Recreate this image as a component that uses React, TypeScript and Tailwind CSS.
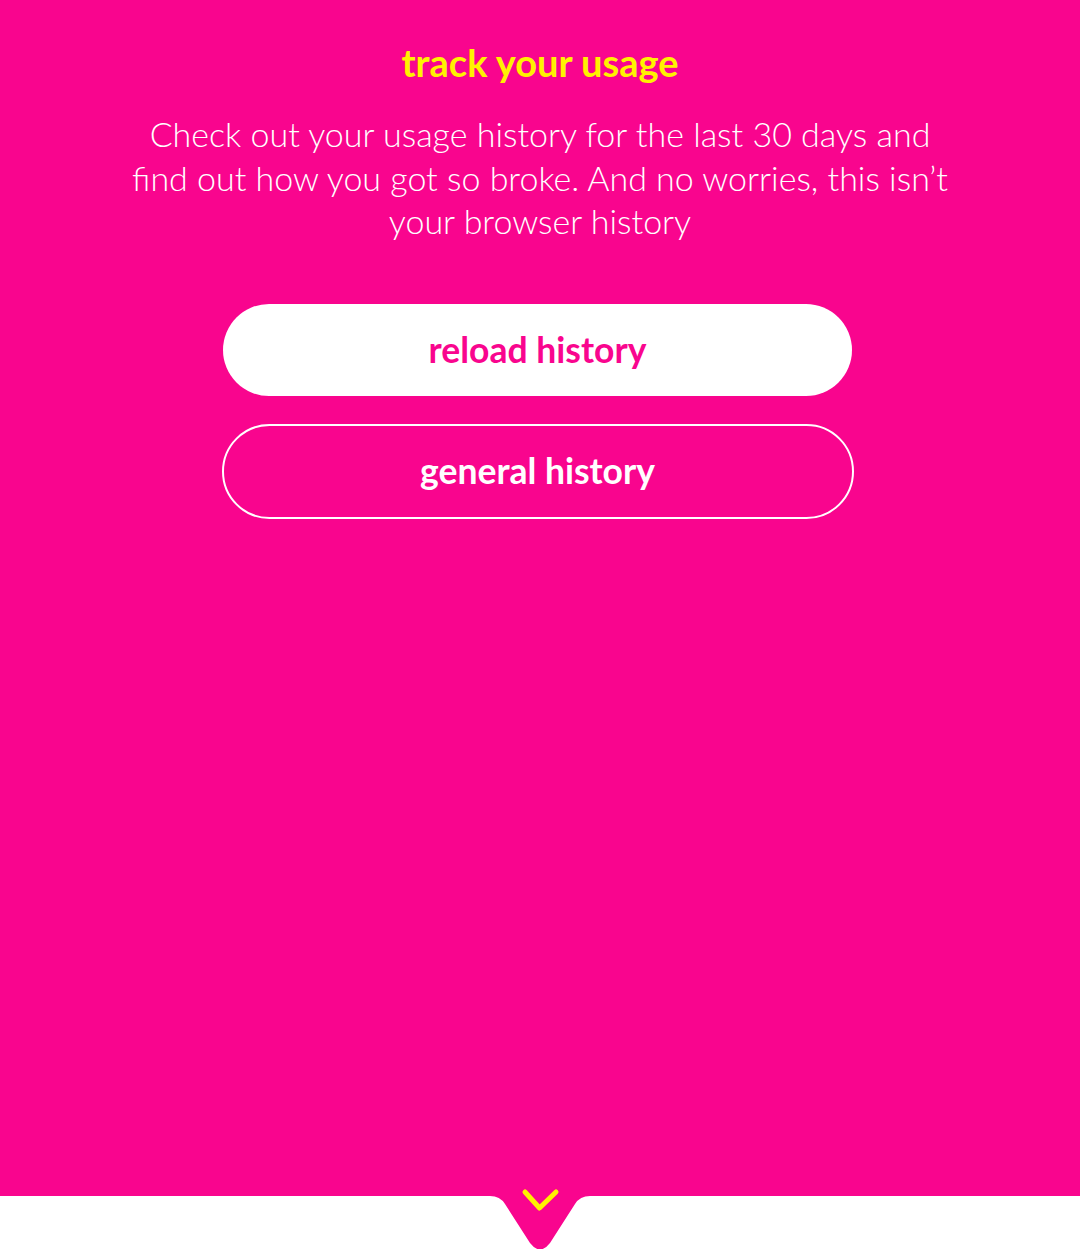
export default function App() {
  return (
    <main className="flex min-h-[1249px] flex-col bg-[#f9058e] font-['Lato',sans-serif]">
      <section className="flex flex-1 flex-col items-center px-6 pt-[36px]">
        <h1 className="text-[38px] font-bold leading-[52px] text-[#fff200]">track your usage</h1>
        <p className="mt-[24px] w-[830px] text-center text-[34px] font-light leading-[43.5px] text-white">
          Check out your usage history for the last 30 days and find out how you got so broke. And no worries, this isn’t your browser history
        </p>

        <div className="mt-[61px] mr-[5px] flex w-[632px] flex-col items-center gap-[28px]">
          <button className="h-[92px] w-[629px] rounded-full bg-white text-[35.5px] font-bold text-[#f9058e]">
            reload history
          </button>
          <button className="h-[95px] w-[632px] rounded-full border-2 border-white text-[35.5px] font-bold text-white">
            general history
          </button>
        </div>
      </section>

      <footer className="relative h-[53px] bg-white">
        <svg
          className="absolute left-[485px] top-[-12px]"
          width="110"
          height="66"
          viewBox="0 -12 110 66"
        >
          <path
            d="M0 -12 L110 -12 L110 0 L105 0 Q95 0 90 8 L65 47 Q55 60 45 47 L20 8 Q15 0 5 0 L0 0 Z"
            fill="#f9058e"
          />
          <path
            d="M40 -4 L54.5 12 L71 -4"
            fill="none"
            stroke="#fff200"
            strokeWidth="5"
            strokeLinecap="round"
            strokeLinejoin="round"
          />
        </svg>
      </footer>
    </main>
  );
}
